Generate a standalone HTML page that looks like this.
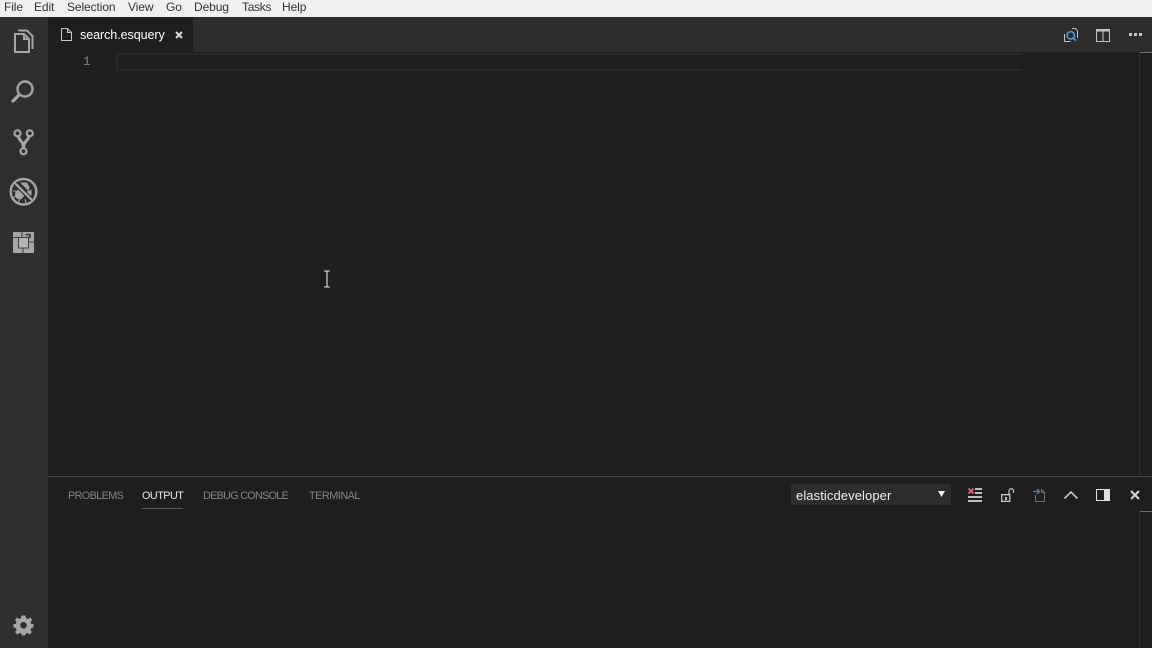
<!DOCTYPE html>
<html><head><meta charset="utf-8"><style>
html,body{margin:0;padding:0;background:#1e1e1e}
body{width:1152px;height:648px;position:relative;overflow:hidden;font-family:"Liberation Sans",sans-serif}
.a{position:absolute;white-space:nowrap}
.m{top:0;height:14px;line-height:14px;font-size:12px;color:#333;letter-spacing:-0.1px}
.p{top:488.500px;line-height:14px;font-size:10.8px;color:#858585}
svg{position:absolute;overflow:visible}
</style></head><body>
<div class="a" style="left:0;top:0;width:1152px;height:17px;background:#f0f0f0"></div>
<div class="a m" style="left:4px">File</div>
<div class="a m" style="left:34px">Edit</div>
<div class="a m" style="left:67px">Selection</div>
<div class="a m" style="left:128px">View</div>
<div class="a m" style="left:166px">Go</div>
<div class="a m" style="left:194px">Debug</div>
<div class="a m" style="left:242px;letter-spacing:-0.3px">Tasks</div>
<div class="a m" style="left:282px">Help</div>

<div class="a" style="left:0;top:17px;width:48px;height:631px;background:#2f2f2f"></div>
<div class="a" style="left:48px;top:17px;width:1104px;height:35px;background:#2d2d2d"></div>
<div class="a" style="left:48px;top:17px;width:145px;height:35px;background:#1e1e1e"></div>

<svg style="left:0;top:17px" width="48" height="250" fill="none" stroke="#a6a6a6">
<path stroke-width="2" d="M15 17H24L29 22V35H15Z M24 17V22H29"/>
<path stroke-width="2" d="M19 14V13.500H27L32.500 19V32"/>
<circle cx="25" cy="72" r="7.500" stroke-width="2.400"/>
<path stroke-width="3.200" stroke-linecap="round" d="M19 78L13 84"/>
<circle cx="17.500" cy="116.300" r="3" stroke-width="2.200"/><circle cx="29.800" cy="116.300" r="3" stroke-width="2.200"/><circle cx="23.500" cy="134.300" r="3" stroke-width="2.200"/>
<path stroke-width="3" d="M18.500 119.500C19 124 23.500 124 23.500 131M28.800 119.500C28.300 124 23.500 124 23.500 131"/>
<circle cx="23.500" cy="174.700" r="12.800" stroke-width="2.400"/>
<ellipse cx="19.500" cy="177.500" rx="4.500" ry="5" fill="#a6a6a6" stroke="none"/>
<path fill="#a6a6a6" stroke="none" d="M20.500 165.500H27L29.500 170L28.500 174L21.500 167ZM31.500 172.500L31.500 178L29.500 180.500L26 175Z"/>
<path stroke-width="1.100" d="M13 174H16M13 181L16 179M18 186L20 182M26 186L25 182"/>
<path stroke="#2f2f2f" stroke-width="4.500" d="M15 166.200L32 183.200"/>
<path stroke-width="2.200" d="M14.500 165.700L32.500 183.700"/>
<path fill="#a6a6a6" stroke="none" d="M13 215H34V236H13Z"/>
<path stroke="#3c3c3c" stroke-width="1" fill="none" d="M13 220.500H18M22 215V220.500M28 225H34M23 231V236"/>
<path stroke="#3c3c3c" stroke-width="1.500" fill="#8a8a8a" d="M25.500 217.500H30V221.500"/>
<rect x="18.500" y="220.500" width="10" height="10.500" fill="#b4b4b4" stroke="#3c3c3c" stroke-width="1"/>
</svg>

<svg style="left:13px;top:615px" width="22" height="22"><path fill="#a6a6a6" d="M8.500 0.500H12.500L13 3.200L15 4L17.300 2.500L19.200 5L17.500 7L18.300 9L20.500 9V12.500L18.200 13L17.400 15L18.900 17L16.500 19.500L14.500 17.900L12.500 18.700L12.200 20.500H8.800L8.500 18.700L6.500 17.900L4.500 19.500L2 17L3.600 15L2.800 13L0.500 12.500V9L2.700 9L3.500 7L2 5L4 2.500L6 4L8 3.200ZM10.500 7A3.300 3.300 0 1 0 10.501 7Z" fill-rule="evenodd"/></svg>

<svg style="left:61px;top:28px" width="12" height="14" fill="none" stroke="#c5c5c5" stroke-width="1"><path d="M0.500 0.500H6.500L10.500 4.500V12.500H0.500Z M6.500 0.500V4.500H10.500"/></svg>
<div class="a" style="left:80px;top:28px;line-height:15px;font-size:12.600px;color:#fff;letter-spacing:-0.1px">search.esquery</div>
<svg style="left:175px;top:31px" width="8" height="8" stroke="#d8d8d8" stroke-width="2"><path d="M1 1L7 7M7 1L1 7"/></svg>

<svg style="left:1062px;top:26px" width="18" height="18" fill="none">
<path stroke="#c5c5c5" d="M2.500 8V15.500H8.500M10 2.500H13.500L15.500 5V12"/>
<circle cx="8.700" cy="9.300" r="3.700" stroke="#4b9fe0" stroke-width="1.500"/>
<path stroke="#4b9fe0" stroke-width="1.500" d="M11.300 12L14 14.700"/></svg>
<svg style="left:1096px;top:29px" width="14" height="13" fill="none" stroke="#c5c5c5"><path stroke-width="1" d="M0.500 0.500H13.500V12.500H0.500Z M7 0.500V12.500"/><path stroke-width="2" d="M0 1.500H14"/></svg>
<svg style="left:1129px;top:33px" width="13" height="3" fill="#c5c5c5"><rect width="3" height="3"/><rect x="5" width="3" height="3"/><rect x="10" width="3" height="3"/></svg>

<div class="a" style="left:83px;top:55px;line-height:15px;font-family:'Liberation Mono',monospace;font-size:12.500px;color:#858585">1</div>
<div class="a" style="left:116px;top:53px;width:906px;height:14px;border:2px solid #282828;border-right:0"></div>
<div class="a" style="left:1022px;top:52px;width:117px;height:19px;background:#1e1e1e"></div>

<div class="a" style="left:1139px;top:52px;width:1px;height:424px;background:#303030"></div>
<div class="a" style="left:1140px;top:52px;width:12px;height:1px;background:#6e6e6e"></div>

<svg style="left:320px;top:270px" width="14" height="18" fill="none" stroke="#e4e4e4" stroke-width="1.100"><path d="M4 1H6C7 1 7 2 7 2V16C7 16 7 17 6 17H4M10 1H8C7 1 7 2 7 2M10 17H8C7 17 7 16 7 16"/></svg>

<div class="a" style="left:48px;top:476px;width:1104px;height:1px;background:#444"></div>
<div class="a p" style="left:68px;letter-spacing:-0.6px">PROBLEMS</div>
<div class="a p" style="left:142px;color:#e7e7e7;letter-spacing:-0.5px">OUTPUT</div>
<div class="a p" style="left:203px;letter-spacing:-0.7px">DEBUG CONSOLE</div>
<div class="a p" style="left:309px;letter-spacing:-0.45px">TERMINAL</div>
<div class="a" style="left:142px;top:508px;width:41px;height:1px;background:#5a5a5a"></div>

<div class="a" style="left:791px;top:484px;width:160px;height:21px;background:#2d2d2d"></div>
<div class="a" style="left:796px;top:488px;line-height:16px;font-size:13px;color:#f0f0f0;letter-spacing:0.09px">elasticdeveloper</div>
<svg style="left:938px;top:491px" width="7" height="6" fill="#f0f0f0"><path d="M0 0H7L3.500 6Z"/></svg>

<svg style="left:968px;top:488px" width="15" height="14"><path stroke="#bdbdbd" stroke-width="2" d="M7 1H14M7 5H14M0 9H14M0 13H14" fill="none"/><path stroke="#e4675f" stroke-width="1.800" d="M0.500 0.500L5.500 5.500M5.500 0.500L0.500 5.500"/></svg>
<svg style="left:1001px;top:488px" width="14" height="14" fill="none" stroke="#c5c5c5"><path stroke-width="1.300" d="M0.700 6.700H8.800V13.300H0.700Z"/><path stroke-width="1.200" d="M8 6V3C8 0 12.500 0 12.500 3V5"/><rect x="4" y="9" width="2" height="3" fill="#c5c5c5" stroke="none"/></svg>
<svg style="left:1033px;top:488px" width="13" height="14" fill="none"><path stroke="#707070" d="M2.500 7V13.500H11.500V4.500L8.500 1.500V4.500H11.500"/><path stroke="#4f7da3" stroke-width="1.500" d="M0 3.500H6M4 1L6.500 3.500L4 6"/></svg>
<svg style="left:1064px;top:490px" width="14" height="10" fill="none" stroke="#c5c5c5" stroke-width="1.600"><path d="M0.500 8.500L7 2L13.500 8.500"/></svg>
<svg style="left:1096px;top:489px" width="14" height="12"><rect x="0.500" y="0.500" width="13" height="11" fill="none" stroke="#e0e0e0"/><rect x="8" y="0" width="6" height="12" fill="#e0e0e0"/></svg>
<svg style="left:1130px;top:490px" width="10" height="10" stroke="#d8d8d8" stroke-width="2"><path d="M1 1L9 9M9 1L1 9"/></svg>

<div class="a" style="left:1139px;top:511px;width:1px;height:137px;background:#303030"></div>
<div class="a" style="left:1140px;top:511px;width:12px;height:1px;background:#6e6e6e"></div>
</body></html>
